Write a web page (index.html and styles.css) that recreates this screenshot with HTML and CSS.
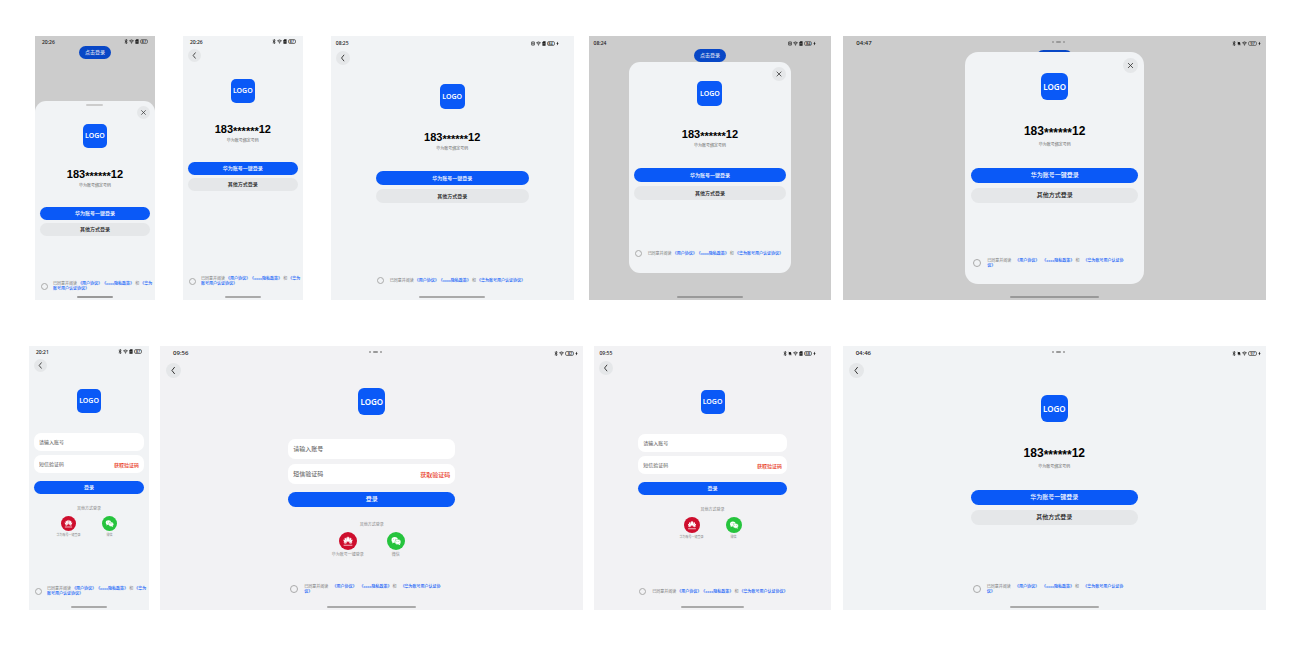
FILE: index.html
```html
<!DOCTYPE html>
<html lang="zh-CN">
<head>
    <meta charset="UTF-8">
    <meta name="viewport" content="width=device-width, initial-scale=1.0">
    <title>华为账号一键登录</title>
    <link rel="stylesheet" href="styles.css">
</head>
<body>
    <!-- Shared icons -->
    <svg class="sprite" aria-hidden="true">
        <symbol id="i-bt" viewBox="0 0 12 16"><path d="M2 4.5l8 7L6 15V1l4 3.500-8 7" fill="none" stroke="currentColor" stroke-width="2.200"/></symbol>
        <symbol id="i-wifi" viewBox="0 0 20 16"><path d="M1 5.500Q10-2 19 5.500M4.500 9.500Q10 4.500 15.500 9.500" fill="none" stroke="currentColor" stroke-width="3"/><circle cx="10" cy="13" r="2.500" fill="currentColor"/></symbol>
        <symbol id="i-sim" viewBox="0 0 12 16"><path d="M4 1h7v14H1V4z" fill="currentColor"/><path d="M6 6v5" stroke="#fff" stroke-width="1.500"/></symbol>
        <symbol id="i-mute" viewBox="0 0 16 16"><path d="M3 12V7a5 5 0 0 1 10 0v5zM6 13h4v2H6z" fill="currentColor"/><path d="M2 1l12 14" stroke="currentColor" stroke-width="2"/></symbol>
        <symbol id="i-nfc" viewBox="0 0 16 16"><rect x="1.500" y="1.500" width="13" height="13" rx="2" fill="none" stroke="currentColor" stroke-width="2.500"/><path d="M5 12V4.500l6 7V4" fill="none" stroke="currentColor" stroke-width="2"/></symbol>
        <symbol id="i-bolt" viewBox="0 0 10 16"><path d="M7 1L1 9h3l-1 6 6-8H6z" fill="currentColor"/></symbol>
        <symbol id="i-back" viewBox="0 0 24 24"><path d="M13.500 7L9.500 12l4 5" fill="none" stroke="currentColor" stroke-width="1.600" stroke-linecap="round" stroke-linejoin="round"/></symbol>
        <symbol id="i-close" viewBox="0 0 24 24"><path d="M8.500 8.500l7 7M15.500 8.500l-7 7" fill="none" stroke="currentColor" stroke-width="1.300" stroke-linecap="round"/></symbol>
        <symbol id="i-huawei" viewBox="0 0 48 48">
            <g fill="#fff" transform="translate(4 4) scale(.83)">
                <path d="M23.500 28C17 22 16.500 14 22.500 10c2 5 2 11 1 18z"/>
                <path d="M22 28.500C13.500 25 11 18.500 14.500 13c4 4 7 9 7.500 15.500z"/>
                <path d="M21 29.500c-8 .5-12.500-4-11.500-10 5.500 1.500 9 5 11.500 10z"/>
                <path d="M20 30.500c-4 3-9 2-10-2.500 4 0 7 .5 10 2.500z"/>
                <path d="M24.500 28C31 22 31.500 14 25.500 10c-2 5-2 11-1 18z"/>
                <path d="M26 28.500C34.500 25 37 18.500 33.500 13c-4 4-7 9-7.500 15.500z"/>
                <path d="M27 29.500c8 .5 12.500-4 11.500-10-5.500 1.500-9 5-11.500 10z"/>
                <path d="M28 30.500c4 3 9 2 10-2.500-4 0-7 .5-10 2.500z"/>
                <path d="M10 36h28v3.500H10z" opacity=".7"/>
            </g>
        </symbol>
        <symbol id="i-wechat" viewBox="0 0 48 48">
            <ellipse cx="20.500" cy="21" rx="8.500" ry="7.500" fill="#fff"/><path d="M15 26l-1.500 4.500 5-2.500z" fill="#fff"/>
            <ellipse cx="29" cy="26.500" rx="8" ry="7" fill="#fff" stroke="#26c43d" stroke-width="1"/><path d="M34 31l1.500 4-5-2z" fill="#fff"/>
            <g fill="#26c43d"><circle cx="18" cy="19" r="1"/><circle cx="23" cy="19" r="1"/><circle cx="26.500" cy="25" r="1"/><circle cx="31.500" cy="25" r="1"/></g>
        </symbol>
    </svg>

    <!-- Row 1: one-tap login -->
    <section class="row row-top">
        <div class="screen phone dimmed">
            <div class="status">
                <span class="time">20:26</span>
                <span class="icons"><svg class="bt"><use href="#i-bt"/></svg><svg class="wifi"><use href="#i-wifi"/></svg><svg class="sim"><use href="#i-sim"/></svg><span class="battery">87</span></span>
            </div>
            <button class="pill" type="button">点击登录</button>
            <div class="sheet">
                <span class="handle"></span>
                <button class="round close" type="button" aria-label="关闭"><svg><use href="#i-close"/></svg></button>
                <div class="logo">LOGO</div>
                <div class="number">183<span class="mask">******</span>12</div>
                <div class="hint">华为账号绑定号码</div>
                <button class="btn primary" type="button">华为账号一键登录</button>
                <button class="btn" type="button">其他方式登录</button>
                <div class="agreement">
                    <input type="checkbox" id="agree1">
                    <label for="agree1">已同意并阅读 <a href="#">《用户协议》</a><a href="#">《xxxx隐私政策》</a> 和 <a href="#">《华为账号用户认证协议》</a></label>
                </div>
            </div>
            <span class="home"></span>
        </div>

        <div class="screen phone far">
            <div class="status">
                <span class="time">20:26</span>
                <span class="icons"><svg class="bt"><use href="#i-bt"/></svg><svg class="wifi"><use href="#i-wifi"/></svg><svg class="sim"><use href="#i-sim"/></svg><span class="battery">87</span></span>
            </div>
            <button class="round back" type="button" aria-label="返回"><svg><use href="#i-back"/></svg></button>
            <div class="content">
                <div class="logo">LOGO</div>
                <div class="number">183<span class="mask">******</span>12</div>
                <div class="hint">华为账号绑定号码</div>
                <button class="btn primary" type="button">华为账号一键登录</button>
                <button class="btn" type="button">其他方式登录</button>
                <div class="agreement">
                    <input type="checkbox" id="agree2">
                    <label for="agree2">已同意并阅读 <a href="#">《用户协议》</a><a href="#">《xxxx隐私政策》</a> 和 <a href="#">《华为账号用户认证协议》</a></label>
                </div>
            </div>
            <span class="home"></span>
        </div>

        <div class="screen fold far">
            <div class="status">
                <span class="time">08:25</span>
                <span class="icons"><svg class="nfc"><use href="#i-nfc"/></svg><svg class="wifi"><use href="#i-wifi"/></svg><svg class="sim"><use href="#i-sim"/></svg><span class="battery">84</span><svg class="bolt"><use href="#i-bolt"/></svg></span>
            </div>
            <button class="round back" type="button" aria-label="返回"><svg><use href="#i-back"/></svg></button>
            <div class="content">
                <div class="logo">LOGO</div>
                <div class="number">183<span class="mask">******</span>12</div>
                <div class="hint">华为账号绑定号码</div>
                <button class="btn primary" type="button">华为账号一键登录</button>
                <button class="btn" type="button">其他方式登录</button>
                <div class="agreement">
                    <input type="checkbox" id="agree3">
                    <label for="agree3">已同意并阅读 <a href="#">《用户协议》</a><a href="#">《xxxx隐私政策》</a> 和 <a href="#">《华为账号用户认证协议》</a></label>
                </div>
            </div>
            <span class="home"></span>
        </div>

        <div class="screen fold dimmed">
            <div class="status">
                <span class="time">08:24</span>
                <span class="icons"><svg class="nfc"><use href="#i-nfc"/></svg><svg class="wifi"><use href="#i-wifi"/></svg><svg class="sim"><use href="#i-sim"/></svg><span class="battery">84</span><svg class="bolt"><use href="#i-bolt"/></svg></span>
            </div>
            <button class="pill" type="button">点击登录</button>
            <div class="dialog">
                <button class="round close" type="button" aria-label="关闭"><svg><use href="#i-close"/></svg></button>
                <div class="logo">LOGO</div>
                <div class="number">183<span class="mask">******</span>12</div>
                <div class="hint">华为账号绑定号码</div>
                <button class="btn primary" type="button">华为账号一键登录</button>
                <button class="btn" type="button">其他方式登录</button>
                <div class="agreement">
                    <input type="checkbox" id="agree4">
                    <label for="agree4">已同意并阅读 <a href="#">《用户协议》</a><a href="#">《xxxx隐私政策》</a> 和 <a href="#">《华为账号用户认证协议》</a></label>
                </div>
            </div>
            <span class="home"></span>
        </div>

        <div class="screen tablet dimmed near">
            <div class="status">
                <span class="time">04:47</span>
                <span class="dots"><i></i><b></b><i></i></span>
                <span class="icons"><svg class="bt"><use href="#i-bt"/></svg><svg class="mute"><use href="#i-mute"/></svg><svg class="wifi"><use href="#i-wifi"/></svg><span class="battery">97</span><svg class="bolt"><use href="#i-bolt"/></svg></span>
            </div>
            <button class="pill" type="button" aria-label="点击登录"></button>
            <div class="dialog">
                <button class="round close" type="button" aria-label="关闭"><svg><use href="#i-close"/></svg></button>
                <div class="logo">LOGO</div>
                <div class="number">183<span class="mask">******</span>12</div>
                <div class="hint">华为账号绑定号码</div>
                <button class="btn primary" type="button">华为账号一键登录</button>
                <button class="btn" type="button">其他方式登录</button>
                <div class="agreement">
                    <input type="checkbox" id="agree5">
                    <label for="agree5">已同意并阅读 <a href="#">《用户协议》</a><a href="#">《xxxx隐私政策》</a> 和 <a href="#">《华为账号用户认证协议》</a></label>
                </div>
            </div>
            <span class="home"></span>
        </div>
    </section>

    <!-- Row 2: other login methods -->
    <section class="row row-bottom">
        <div class="screen phone">
            <div class="status">
                <span class="time">20:21</span>
                <span class="icons"><svg class="bt"><use href="#i-bt"/></svg><svg class="wifi"><use href="#i-wifi"/></svg><svg class="sim"><use href="#i-sim"/></svg><span class="battery">87</span></span>
            </div>
            <button class="round back" type="button" aria-label="返回"><svg><use href="#i-back"/></svg></button>
            <form class="content">
                <div class="logo">LOGO</div>
                <div class="field first"><input type="text" placeholder="请输入账号" aria-label="请输入账号"></div>
                <div class="field"><input type="text" placeholder="短信验证码" aria-label="短信验证码"><button class="code" type="button">获取验证码</button></div>
                <button class="btn primary submit" type="button">登录</button>
                <div class="other-title">其他方式登录</div>
                <div class="others">
                    <button class="other" type="button"><svg class="huawei"><use href="#i-huawei"/></svg>华为账号一键登录</button>
                    <button class="other" type="button"><svg class="wechat"><use href="#i-wechat"/></svg>微信</button>
                </div>
                <div class="agreement">
                    <input type="checkbox" id="agree6">
                    <label for="agree6">已同意并阅读 <a href="#">《用户协议》</a><a href="#">《xxxx隐私政策》</a> 和 <a href="#">《华为账号用户认证协议》</a></label>
                </div>
            </form>
            <span class="home"></span>
        </div>

        <div class="screen tablet gray">
            <div class="status">
                <span class="time">09:56</span>
                <span class="dots"><i></i><b></b><i></i></span>
                <span class="icons"><svg class="bt"><use href="#i-bt"/></svg><svg class="wifi"><use href="#i-wifi"/></svg><span class="battery">82</span><svg class="bolt"><use href="#i-bolt"/></svg></span>
            </div>
            <button class="round back" type="button" aria-label="返回"><svg><use href="#i-back"/></svg></button>
            <form class="content">
                <div class="logo">LOGO</div>
                <div class="field first"><input type="text" placeholder="请输入账号" aria-label="请输入账号"></div>
                <div class="field"><input type="text" placeholder="短信验证码" aria-label="短信验证码"><button class="code" type="button">获取验证码</button></div>
                <button class="btn primary submit" type="button">登录</button>
                <div class="other-title">其他方式登录</div>
                <div class="others">
                    <button class="other" type="button"><svg class="huawei"><use href="#i-huawei"/></svg>华为账号一键登录</button>
                    <button class="other" type="button"><svg class="wechat"><use href="#i-wechat"/></svg>微信</button>
                </div>
                <div class="agreement">
                    <input type="checkbox" id="agree7">
                    <label for="agree7">已同意并阅读 <a href="#">《用户协议》</a><a href="#">《xxxx隐私政策》</a> 和 <a href="#">《华为账号用户认证协议》</a></label>
                </div>
            </form>
            <span class="home"></span>
        </div>

        <div class="screen fold gray">
            <div class="status">
                <span class="time">09:55</span>
                <span class="icons"><svg class="bt"><use href="#i-bt"/></svg><svg class="mute"><use href="#i-mute"/></svg><svg class="wifi"><use href="#i-wifi"/></svg><svg class="sim"><use href="#i-sim"/></svg><span class="battery">68</span><svg class="bolt"><use href="#i-bolt"/></svg></span>
            </div>
            <button class="round back" type="button" aria-label="返回"><svg><use href="#i-back"/></svg></button>
            <form class="content">
                <div class="logo">LOGO</div>
                <div class="field first"><input type="text" placeholder="请输入账号" aria-label="请输入账号"></div>
                <div class="field"><input type="text" placeholder="短信验证码" aria-label="短信验证码"><button class="code" type="button">获取验证码</button></div>
                <button class="btn primary submit" type="button">登录</button>
                <div class="other-title">其他方式登录</div>
                <div class="others">
                    <button class="other" type="button"><svg class="huawei"><use href="#i-huawei"/></svg>华为账号一键登录</button>
                    <button class="other" type="button"><svg class="wechat"><use href="#i-wechat"/></svg>微信</button>
                </div>
                <div class="agreement">
                    <input type="checkbox" id="agree8">
                    <label for="agree8">已同意并阅读 <a href="#">《用户协议》</a><a href="#">《xxxx隐私政策》</a> 和 <a href="#">《华为账号用户认证协议》</a></label>
                </div>
            </form>
            <span class="home"></span>
        </div>

        <div class="screen tablet near">
            <div class="status">
                <span class="time">04:46</span>
                <span class="dots"><i></i><b></b><i></i></span>
                <span class="icons"><svg class="bt"><use href="#i-bt"/></svg><svg class="mute"><use href="#i-mute"/></svg><svg class="wifi"><use href="#i-wifi"/></svg><span class="battery">97</span><svg class="bolt"><use href="#i-bolt"/></svg></span>
            </div>
            <button class="round back" type="button" aria-label="返回"><svg><use href="#i-back"/></svg></button>
            <div class="content">
                <div class="logo">LOGO</div>
                <div class="number">183<span class="mask">******</span>12</div>
                <div class="hint">华为账号绑定号码</div>
                <button class="btn primary" type="button">华为账号一键登录</button>
                <button class="btn" type="button">其他方式登录</button>
                <div class="agreement">
                    <input type="checkbox" id="agree9">
                    <label for="agree9">已同意并阅读 <a href="#">《用户协议》</a><a href="#">《xxxx隐私政策》</a> 和 <a href="#">《华为账号用户认证协议》</a></label>
                </div>
            </div>
            <span class="home"></span>
        </div>
    </section>
</body>
</html>
```
FILE: styles.css
```css
* {
    box-sizing: border-box;
}

body {
    margin: 0;
    padding: 36px 33px 36px 29px;
    background-color: #fff;
    font-family: "Noto Sans", "Noto Sans CJK SC", sans-serif;
    color: #191919;
}

button, input {
    margin: 0;
    padding: 0;
    border: none;
    background: none;
    font-family: inherit;
    color: inherit;
}

button {
    cursor: pointer;
}

a {
    color: #0a59f7;
    font-weight: 500;
    text-decoration: none;
}

.sprite {
    display: none;
}

.row {
    display: flex;
}

.row-top {
    padding-left: 6px;
    margin-bottom: 46px;
}

.row-top .screen + .screen {
    margin-left: 15px;
}

.row-top .screen + .far {
    margin-left: 28px;
}

.row-bottom .screen + .screen {
    margin-left: 11px;
}

.row .screen + .near {
    margin-left: 12px;
}

/* Screen sizes */
.screen {
    display: flex;
    flex-direction: column;
    min-width: 0;
    min-height: 264px;
    padding-bottom: 2px;
    background-color: #f1f3f5;
    font-size: 5px;
}

.phone {
    --bar: 11px;
    --round: 13px;
    --logo: 24px;
    --btn: 13px;
    --icon: 15px;
    --field: 18px;
    --gap: 4px;
    --edge: 5px;
    --col: 41px;
    flex: 120 1 0;
}

.fold {
    --bar: 14px;
    --round: 14px;
    --logo: 25px;
    --btn: 14px;
    --icon: 16px;
    --field: 18px;
    --gap: 4px;
    --edge: 5px;
    --col: 42px;
    flex: 243 1 0;
}

.fold.gray {
    --btn: 13px;
    --logo: 24px;
    flex: 236 1 0;
}

.tablet {
    --bar: 14px;
    --round: 15px;
    --logo: 27px;
    --btn: 15px;
    --icon: 18px;
    --field: 20px;
    --gap: 5px;
    --edge: 6px;
    --col: 48px;
    flex: 423 1 0;
    font-size: 6px;
}

.gray {
    background-color: #f2f2f4;
}

.dimmed {
    background-color: #ccc;
}

/* Status bar */
.status {
    display: flex;
    align-items: center;
    height: var(--bar);
    padding: 0 7px;
    line-height: 6px;
    font-weight: 500;
}

.fold .status {
    padding: 0 15px 0 5px;
}

.tablet .status {
    padding: 0 5px;
}

.time, .icons {
    flex: 1;
}

.tablet .time {
    padding-left: 8px;
}

.icons {
    display: flex;
    justify-content: flex-end;
    align-items: center;
    gap: 1px;
}

.icons svg {
    width: 4px;
    height: 5px;
}

.icons .wifi {
    width: 5px;
}

.icons .bolt {
    width: 3px;
}

.battery {
    width: 8px;
    height: 5px;
    border: 1px solid #777;
    border-radius: 2px;
    font-size: 4px;
    line-height: 3px;
    text-align: center;
}

.tablet .battery {
    width: 9px;
}

.dots {
    display: flex;
    gap: 2px;
    margin-bottom: 2px;
}

.dots i, .dots b {
    width: 2px;
    height: 2px;
    border-radius: 1px;
    background-color: #999;
}

.dots b {
    width: 5px;
}

.round {
    display: flex;
    flex: none;
    align-items: center;
    justify-content: center;
    width: var(--round);
    height: var(--round);
    border-radius: 50%;
    background-color: #e5e7e9;
    color: #333;
}

.round svg {
    width: 100%;
    height: 100%;
}

.back {
    margin: 2px 0 0 var(--edge);
}

.tablet .back {
    margin-top: 3px;
}

.fold .back {
    margin-top: 1px;
}

.close {
    align-self: flex-end;
    margin-top: var(--edge);
}

.pill {
    align-self: center;
    flex: none;
    height: 13px;
    margin-top: -1px;
    padding: 0 6px;
    border-radius: 8px;
    background-color: #0847c6;
    color: #ced8ee;
    font-size: 5px;
    font-weight: 500;
    line-height: 13px;
}

.tablet .pill {
    width: 37px;
    height: 15px;
    margin-top: 0;
    margin-bottom: -13px;
}

/* Containers */
.content, .sheet, .dialog {
    display: flex;
    flex-direction: column;
    align-items: stretch;
}

.content {
    flex: 1;
    margin: 0 var(--edge);
    padding: 17px 0 10px;
}

.fold .content {
    width: 63%;
    margin: 0 auto;
    padding: 19px 0 12px;
}

.fold form.content {
    padding: 15px 0 11px;
}

.tablet .content {
    width: 39%;
    min-width: 167px;
    margin: 0 auto;
    padding: 17px 0 12px;
}

.tablet form.content {
    padding-top: 10px;
}

.sheet {
    flex: 1;
    margin-top: 42px;
    margin-bottom: -4px;
    padding: 3px 5px 9px;
    border-radius: 11px 11px 0 0;
    background-color: #f1f3f5;
}

.handle {
    align-self: center;
    width: 17px;
    height: 2px;
    border-radius: 1px;
    background-color: #ccc;
}

.sheet .close {
    margin-top: 0;
    margin-bottom: 5px;
}

.dialog {
    position: relative;
    width: 67%;
    min-height: 211px;
    margin: 0 auto;
    padding: 0 5px 16px;
    border-radius: 11px;
    background-color: #f1f3f5;
}

.tablet .dialog {
    width: 42%;
    min-width: 179px;
    min-height: 232px;
    padding: 0 6px 16px;
    border-radius: 13px;
}

/* One-tap login */
.logo {
    align-self: center;
    flex: none;
    width: var(--logo);
    height: var(--logo);
    border-radius: 5px;
    background-color: #0a59f7;
    color: #fff;
    font-size: 7px;
    font-weight: 600;
    line-height: var(--logo);
    text-align: center;
}

.tablet .logo {
    border-radius: 6px;
    font-size: 8px;
}

.number {
    margin-top: 19px;
    color: #000;
    font-family: "Liberation Sans", Arial, sans-serif;
    font-size: 11px;
    font-weight: bold;
    line-height: 14px;
    text-align: center;
}

.mask {
    line-height: 1;
    vertical-align: -2px;
}

.hint {
    margin: 1px 0 18px;
    color: #666;
    font-size: 4px;
    line-height: 6px;
    text-align: center;
}

.fold .number {
    margin-top: 21px;
}

.fold .hint {
    margin-bottom: 19px;
}

.tablet .number {
    margin-top: 24px;
    font-size: 12px;
}

.tablet .hint {
    margin: 3px 0 20px;
}

.btn {
    flex: none;
    height: var(--btn);
    border-radius: 8px;
    background-color: #e5e7e9;
    font-size: inherit;
    font-weight: 500;
    line-height: var(--btn);
}

.btn + .btn {
    margin-top: var(--gap);
}

.phone .btn + .btn {
    margin-top: 3px;
}

.primary {
    background-color: #0a59f7;
    color: #fff;
}

/* Login form */
.field {
    display: flex;
    align-items: center;
    flex: none;
    height: var(--field);
    margin-top: var(--gap);
    padding: 0 5px;
    border-radius: 7px;
    background-color: #fff;
}

.first {
    margin-top: 20px;
}

.tablet .first {
    margin-top: 24px;
}

.field input {
    flex: 1;
    min-width: 0;
    font-size: inherit;
    outline: none;
}

.field input::placeholder {
    color: #555;
}

.code {
    color: #e84026;
    font-size: inherit;
    font-weight: 500;
}

.submit {
    margin-top: 8px;
}

.other-title {
    margin: 12px 0 4px;
    color: #888;
    font-size: 4px;
    line-height: 6px;
    text-align: center;
}

.tablet .other-title {
    margin-top: 15px;
}

.others {
    display: flex;
    justify-content: center;
}

.other {
    display: flex;
    flex-direction: column;
    align-items: center;
    gap: 2px;
    width: var(--col);
    color: #888;
    font-size: 3px;
    line-height: 5px;
    white-space: nowrap;
}

.tablet .other {
    font-size: 4px;
}

.other svg {
    width: var(--icon);
    height: var(--icon);
    border-radius: 50%;
}

.huawei {
    background-color: #ce0e2d;
}

.wechat {
    background-color: #26c43d;
}

/* Agreement */
.agreement {
    display: flex;
    align-items: center;
    gap: 5px;
    margin-top: auto;
    padding-left: 1px;
    color: #777;
    font-family: "Liberation Sans", "Noto Sans CJK SC", sans-serif;
    font-size: 4px;
    line-height: 5px;
}

.phone .agreement {
    margin-right: -5px;
}

.agreement input {
    appearance: none;
    flex: none;
    width: 7px;
    height: 7px;
    border: 1px solid #aaa;
    border-radius: 50%;
}

.agreement input:checked {
    background-color: #0a59f7;
}

.agreement label {
    text-spacing-trim: space-all;
}

.fold .agreement {
    gap: 6px;
}

.fold .agreement label {
    white-space: nowrap;
}

.tablet .agreement {
    gap: 6px;
    padding-left: 2px;
}

.tablet .agreement input {
    width: 8px;
    height: 8px;
}

.tablet .agreement label {
    max-width: 142px;
}

.tablet .agreement a {
    margin-left: 3px;
}

.home {
    position: relative;
    align-self: center;
    flex: none;
    width: 30%;
    height: 2px;
    margin-top: auto;
    border-radius: 1px;
    background-color: #aaa;
}

.fold .home {
    width: 27%;
}

.tablet .home {
    width: 21%;
}

.dimmed .home {
    background-color: #999;
}
```
